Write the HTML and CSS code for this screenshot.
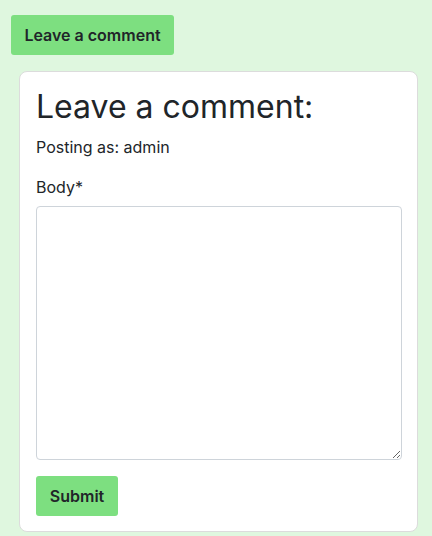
FILE: index.html
```html
<!DOCTYPE html>
<html>
<head>
<meta charset="utf-8">
<link rel="stylesheet" href="styles.css">
</head>
<body>
<div class="page">
  <button class="btn btn-open">Leave a comment</button>
  <div class="card">
    <h2 class="title">Leave a comment:</h2>
    <p class="posting">Posting as: admin</p>
    <label class="label" for="body">Body*</label>
    <textarea id="body" class="textarea"></textarea>
    <button class="btn btn-submit">Submit</button>
  </div>
</div>
</body>
</html>
```

FILE: styles.css
```css
html, body {
  margin: 0;
  padding: 0;
  background: #dff7df;
  font-family: Inter, "Noto Sans", sans-serif;
  color: #212529;
}
.page {
  padding: 15px 14px 0 11px;
  display: flex;
  flex-direction: column;
  align-items: flex-start;
}
.btn {
  font-family: Inter, sans-serif;
  font-weight: 600;
  font-size: 16px;
  color: #212529;
  background: #7ddf80;
  border: none;
  border-radius: 3px;
  height: 40px;
  padding: 0;
  white-space: nowrap;
  text-align: center;
  cursor: pointer;
}
.btn-open {
  width: 163px;
}
.card {
  box-sizing: border-box;
  margin-top: 16px;
  margin-left: 8px;
  width: 399px;
  background: #fff;
  border: 1px solid #dcdcdc;
  border-radius: 8px;
  padding: 16px 16px 15px 16px;
  display: flex;
  flex-direction: column;
  align-items: flex-start;
}
.title {
  margin: 0;
  font-size: 32px;
  font-weight: 400;
  line-height: 38px;
}
.posting {
  margin: 9px 0 0 0;
  font-size: 16px;
  line-height: 24px;
}
.label {
  margin-top: 16px;
  font-size: 16px;
  line-height: 24px;
}
.textarea {
  box-sizing: border-box;
  margin-top: 7px;
  width: 366px;
  height: 254px;
  border: 1px solid #ced4da;
  border-radius: 4px;
  font-family: Inter, sans-serif;
  font-size: 16px;
}
.btn-submit {
  margin-top: 16px;
  width: 82px;
}
```
